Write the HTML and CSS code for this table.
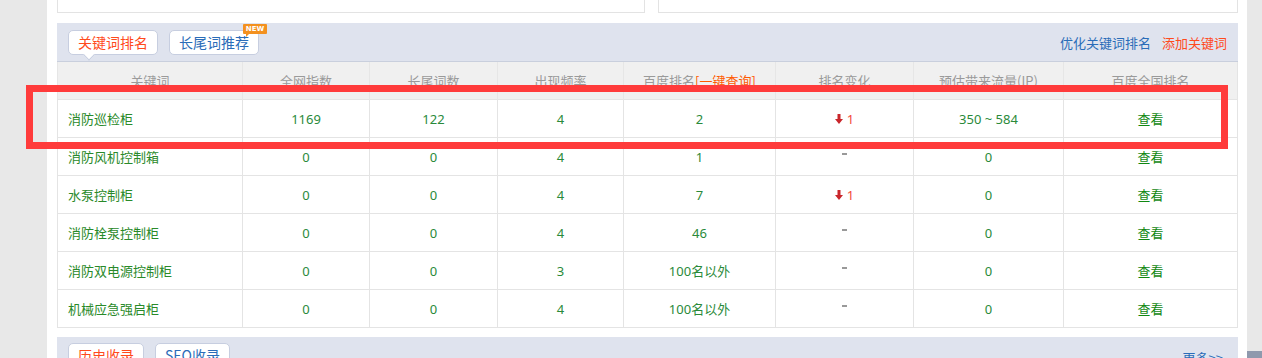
FILE: index.html
```html
<!DOCTYPE html>
<html>
<head>
<meta charset="utf-8">
<link rel="stylesheet" href="styles.css">
</head>
<body>
<div class="page">
  <div class="top-row">
    <div class="top-box b1"></div>
    <div class="top-box b2"></div>
  </div>

  <div class="panel">
    <div class="bar">
      <div class="tabs">
        <span class="tab tab-red active">关键词排名</span>
        <span class="tab tab-blue">长尾词推荐<span class="new">NEW</span></span>
      </div>
      <div class="links">
        <a class="link-blue">优化关键词排名</a>
        <a class="link-red">添加关键词</a>
      </div>
    </div>

    <div class="grid">
      <div class="th">关键词</div>
      <div class="th">全网指数</div>
      <div class="th">长尾词数</div>
      <div class="th">出现频率</div>
      <div class="th">百度排名<span class="query">[一键查询]</span></div>
      <div class="th">排名变化</div>
      <div class="th">预估带来流量(IP)</div>
      <div class="th last">百度全国排名</div>

      <div class="td kw">消防巡检柜</div>
      <div class="td">1169</div>
      <div class="td">122</div>
      <div class="td">4</div>
      <div class="td">2</div>
      <div class="td"><span class="down"><svg width="8" height="10" viewBox="0 0 8 10"><path d="M2.5 0h3v5H8L4 10 0 5h2.5z" fill="#c9262b"/></svg><span class="num">1</span></span></div>
      <div class="td">350 ~ 584</div>
      <div class="td last look">查看</div>

      <div class="td kw">消防风机控制箱</div>
      <div class="td">0</div>
      <div class="td">0</div>
      <div class="td">4</div>
      <div class="td">1</div>
      <div class="td"><span class="dash"></span></div>
      <div class="td">0</div>
      <div class="td last look">查看</div>

      <div class="td kw">水泵控制柜</div>
      <div class="td">0</div>
      <div class="td">0</div>
      <div class="td">4</div>
      <div class="td">7</div>
      <div class="td"><span class="down"><svg width="8" height="10" viewBox="0 0 8 10"><path d="M2.5 0h3v5H8L4 10 0 5h2.5z" fill="#c9262b"/></svg><span class="num">1</span></span></div>
      <div class="td">0</div>
      <div class="td last look">查看</div>

      <div class="td kw">消防栓泵控制柜</div>
      <div class="td">0</div>
      <div class="td">0</div>
      <div class="td">4</div>
      <div class="td">46</div>
      <div class="td"><span class="dash"></span></div>
      <div class="td">0</div>
      <div class="td last look">查看</div>

      <div class="td kw">消防双电源控制柜</div>
      <div class="td">0</div>
      <div class="td">0</div>
      <div class="td">3</div>
      <div class="td">100名以外</div>
      <div class="td"><span class="dash"></span></div>
      <div class="td">0</div>
      <div class="td last look">查看</div>

      <div class="td kw">机械应急强启柜</div>
      <div class="td">0</div>
      <div class="td">0</div>
      <div class="td">4</div>
      <div class="td">100名以外</div>
      <div class="td"><span class="dash"></span></div>
      <div class="td">0</div>
      <div class="td last look">查看</div>
    </div>
  </div>

  <div class="panel panel-bottom">
    <div class="bar bar-bottom">
      <div class="tabs">
        <span class="tab tab-red">历史收录</span>
        <span class="tab tab-blue">SEO收录</span>
      </div>
      <div class="links">
        <a class="link-blue more">更多&gt;&gt;</a>
      </div>
    </div>
  </div>
</div>
<div class="highlight"></div>
<div class="thumb"></div>
</body>
</html>
```

FILE: styles.css
```css
html, body {
  margin: 0;
  padding: 0;
}
body {
  background: #e8e8e8;
  font-family: "Noto Sans", "Noto Sans CJK SC", sans-serif;
  font-size: 13px;
  height: 358px;
  overflow: hidden;
  position: relative;
}
.page {
  width: 1200px;
  margin-left: 47px;
  background: #fff;
  box-sizing: border-box;
  padding: 0 9px 0 10px;
  height: 358px;
}
.top-row {
  display: flex;
  gap: 13px;
  height: 13px;
}
.top-box {
  box-sizing: border-box;
  height: 13px;
  border: 1px solid #e3e3e3;
  border-top: none;
  background: #fff;
}
.b1 { width: 588px; }
.b2 { width: 580px; }

.panel {
  margin-top: 10px;
  width: 1181px;
}
.bar {
  height: 38px;
  background: #dfe3ee;
  border-bottom: 1px solid #c9cfdd;
  display: flex;
  align-items: center;
  justify-content: space-between;
  padding: 0 11px;
}
.tabs {
  display: flex;
  gap: 11px;
  height: 25px;
}
.tab {
  position: relative;
  box-sizing: border-box;
  height: 25px;
  line-height: 22px;
  padding: 0 9px;
  background: #fff;
  border: 1px solid #c7cee0;
  border-radius: 5px;
  font-size: 14px;
  font-family: "Noto Sans CJK SC", sans-serif;
}
.tab-red { color: #ff4a1c; }
.tab-blue { color: #2a6cb8; }
.tab.active::after {
  content: "";
  position: absolute;
  left: 16px;
  bottom: -5px;
  width: 7px;
  height: 7px;
  background: #fff;
  border-right: 1px solid #c7cee0;
  border-bottom: 1px solid #c7cee0;
  transform: rotate(45deg);
}
.new {
  position: absolute;
  right: -9px;
  top: -7px;
  width: 24px;
  height: 10px;
  background: #f3911f;
  color: #fff;
  font-family: "DejaVu Sans", sans-serif;
  font-size: 7px;
  font-weight: bold;
  line-height: 10px;
  text-align: center;
  border-radius: 1px;
}
.new::after {
  content: "";
  position: absolute;
  left: 3px;
  bottom: -3px;
  border-left: 3px solid #f3911f;
  border-bottom: 3px solid transparent;
}
.links {
  display: flex;
  gap: 11px;
  font-family: "Noto Sans CJK SC", sans-serif;
  font-size: 13px;
}
.link-blue { color: #2a6cb8; }
.link-red { color: #ff4a1c; }

.grid {
  display: grid;
  grid-template-columns: 185px 127px 128px 126px 152px 138px 150px 175px;
  grid-auto-rows: 38px;
}
.th, .td {
  box-sizing: border-box;
  border-left: 1px solid #e4e4e4;
  border-bottom: 1px solid #e4e4e4;
  display: flex;
  align-items: center;
  justify-content: center;
  white-space: nowrap;
}
.th {
  background: #f0f0f0;
  color: #9a9a9a;
  font-family: "Noto Sans CJK SC", sans-serif;
  border-left-color: #e6e6e6;
}
.th.last, .td.last {
  border-right: 1px solid #e4e4e4;
}
.query { color: #ff5a00; }
.td {
  color: #2a8a3a;
  font-family: "Noto Sans", "Noto Sans CJK SC", sans-serif;
}
.td.kw {
  justify-content: flex-start;
  padding-left: 10px;
  font-family: "Noto Sans CJK SC", sans-serif;
  color: #2a8a2a;
}
.td.look {
  color: #118811;
  font-family: "Noto Sans CJK SC", sans-serif;
}
.down {
  display: inline-flex;
  align-items: center;
  gap: 4px;
}
.down .num { color: #f24a3a; }
.dash {
  display: inline-block;
  width: 5px;
  height: 2px;
  background: #999;
  margin-top: -6px;
}

.panel-bottom { margin-top: 9px; }
.bar-bottom {
  align-items: flex-start;
  padding-top: 6px;
  box-sizing: border-box;
}
.more { margin-top: 5px; padding-right: 4px; }

.highlight {
  position: absolute;
  left: 26px;
  top: 85px;
  width: 1202px;
  height: 64px;
  box-sizing: border-box;
  border: 7px solid #ff3b3b;
}
.thumb {
  position: absolute;
  left: 1247px;
  top: 351px;
  width: 15px;
  height: 7px;
  background: #8f99ad;
}
```
